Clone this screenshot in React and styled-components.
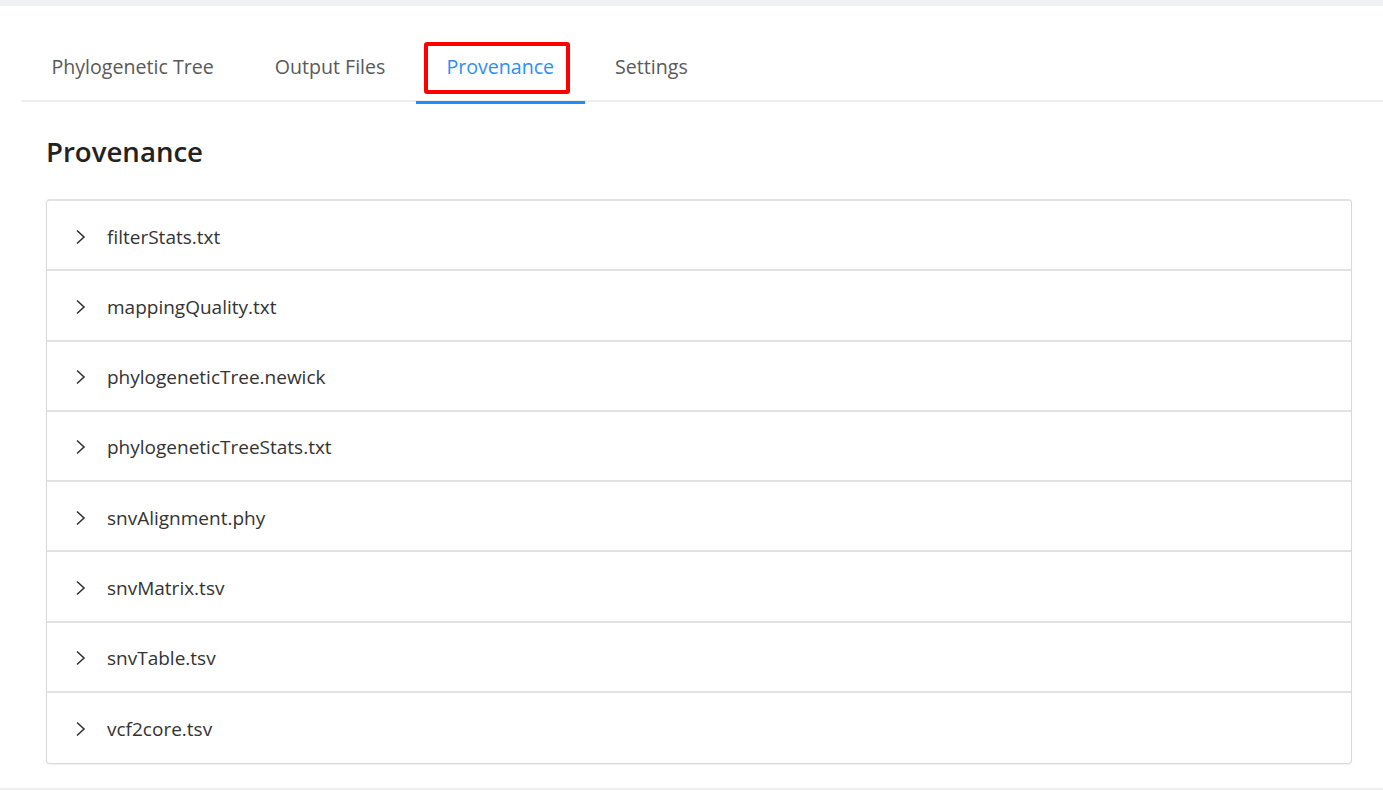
import React from "react";
import styled, { createGlobalStyle } from "styled-components";

const Global = createGlobalStyle`
  html, body { margin: 0; padding: 0; background: #fff; }
  body { font-family: "Open Sans", "Noto Sans", sans-serif; color: #333; }
  * { box-sizing: border-box; }
`;

const Page = styled.div`
  width: 1383px;
  height: 790px;
  display: flex;
  flex-direction: column;
  overflow: hidden;
`;

const TopBand = styled.div`
  height: 6px;
  background: #f0f1f5;
  flex: none;
`;

const Main = styled.div`
  flex: 1;
  margin-left: 21px;
  display: flex;
  flex-direction: column;
`;

const TabBar = styled.div`
  display: flex;
  margin-top: 36px;
  border-bottom: 2px solid #eeeeee;
  height: 60px;
`;

const Tab = styled.div`
  position: relative;
  padding: 0 30.5px 12px;
  height: 60px;
  display: flex;
  align-items: center;
  font-size: 19.6px;
  color: ${(p) => (p.$active ? "#2f8ef5" : "#595959")};
  white-space: nowrap;
  &::after {
    content: "";
    position: absolute;
    left: 0;
    right: 0;
    bottom: -2px;
    height: 3px;
    background: ${(p) => (p.$active ? "#1890ff" : "transparent")};
  }
`;

const Highlight = styled.div`
  position: absolute;
  left: 8px;
  right: 15px;
  top: 0;
  height: 52px;
  border: 4px solid #ff0000;
  border-radius: 3px;
  pointer-events: none;
`;

const Content = styled.div`
  padding: 0 31px 0 25px;
  display: flex;
  flex-direction: column;
`;

const Heading = styled.h2`
  margin: 31px 0 0;
  font-size: 27.6px;
  font-weight: 600;
  color: #222;
  line-height: 36px;
  height: 36px;
`;

const Accordion = styled.div`
  margin-top: 30px;
  border: 1px solid #d9d9d9;
  border-top: 2px solid #e2e2e2;
  border-radius: 4px;
  box-shadow: 0 1px 2px rgba(0, 0, 0, 0.06);
  overflow: hidden;
`;

const Row = styled.div`
  height: 70.25px;
  display: flex;
  align-items: center;
  padding: 3px 0 0 28px;
  gap: 20px;
  border-bottom: ${(p) => (p.$last ? "none" : "2px solid #e2e2e2")};
  font-size: 19px;
  color: #333;
`;

const Chevron = () => (
  <svg width="12" height="16" viewBox="0 0 12 16" fill="none">
    <path d="M2 1.5 L9 8 L2 14.5" stroke="#333" strokeWidth="1.6" />
  </svg>
);

const BottomLine = styled.div`
  margin-top: auto;
  height: 2px;
  background: #f0f0f0;
  flex: none;
`;

const tabs = ["Phylogenetic Tree", "Output Files", "Provenance", "Settings"];
const files = [
  "filterStats.txt",
  "mappingQuality.txt",
  "phylogeneticTree.newick",
  "phylogeneticTreeStats.txt",
  "snvAlignment.phy",
  "snvMatrix.tsv",
  "snvTable.tsv",
  "vcf2core.tsv",
];

export default function App() {
  return (
    <>
      <Global />
      <Page>
        <TopBand />
        <Main>
          <TabBar>
            {tabs.map((t) => (
              <Tab key={t} $active={t === "Provenance"}>
                {t === "Provenance" && <Highlight />}
                {t}
              </Tab>
            ))}
          </TabBar>
          <Content>
            <Heading>Provenance</Heading>
            <Accordion>
              {files.map((f, i) => (
                <Row key={f} $last={i === files.length - 1}>
                  <Chevron />
                  {f}
                </Row>
              ))}
            </Accordion>
          </Content>
        </Main>
        <BottomLine />
      </Page>
    </>
  );
}
